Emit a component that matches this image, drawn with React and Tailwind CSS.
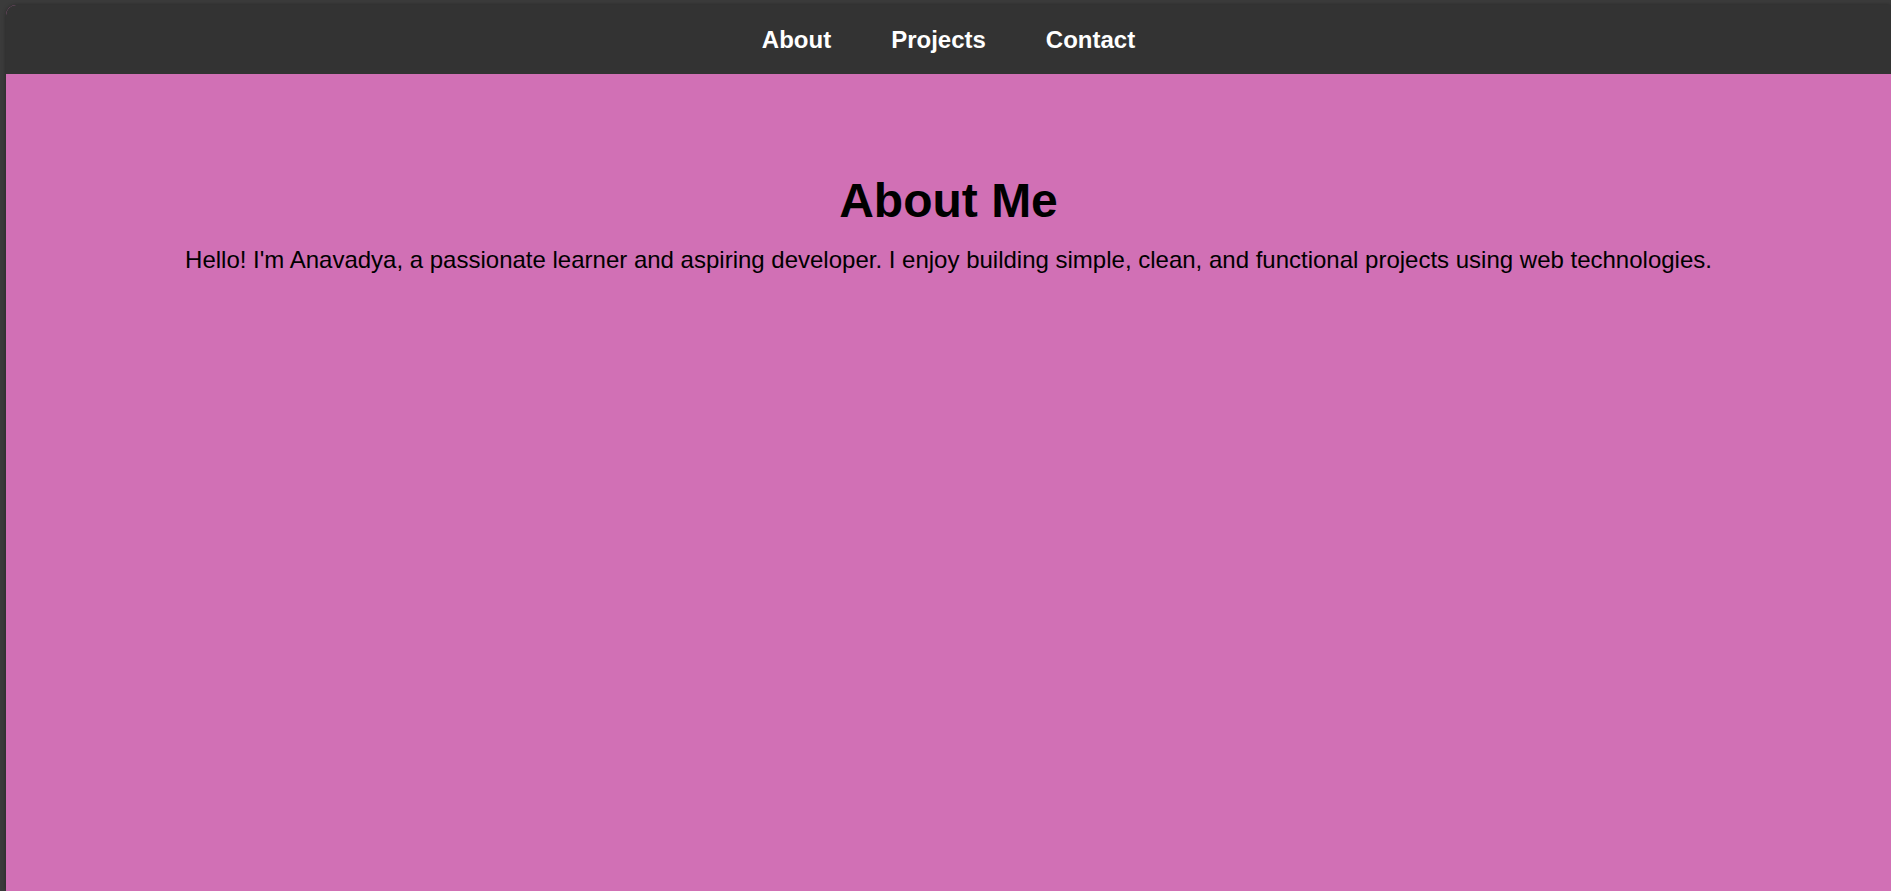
export default function App() {
  const links = ["About", "Projects", "Contact"];

  return (
    <div
      className="h-screen w-full overflow-hidden bg-[#3b3b3b] pl-[6px] pt-[5px]"
      style={{ fontFamily: '"Liberation Sans", Arial, sans-serif' }}
    >
      <div className="flex h-full flex-col overflow-hidden rounded-tl-[10px] bg-[#d170b5] shadow-[0_0_4px_rgba(0,0,0,0.35)]">
        <nav className="flex h-[69px] shrink-0 items-center justify-center gap-[60px] bg-[#333333]">
          {links.map((link) => (
            <a key={link} href="#" className="text-[24px] font-bold leading-none text-white">
              {link}
            </a>
          ))}
        </nav>

        <section className="flex flex-col items-center px-8 pt-[99px] text-black">
          <h2 className="text-[48px] font-bold leading-[55px]">About Me</h2>
          <p className="mt-[18px] text-[24px] leading-[27px]">
            Hello! I'm Anavadya, a passionate learner and aspiring developer. I enjoy building simple, clean, and functional projects using web technologies.
          </p>
        </section>
      </div>
    </div>
  );
}
